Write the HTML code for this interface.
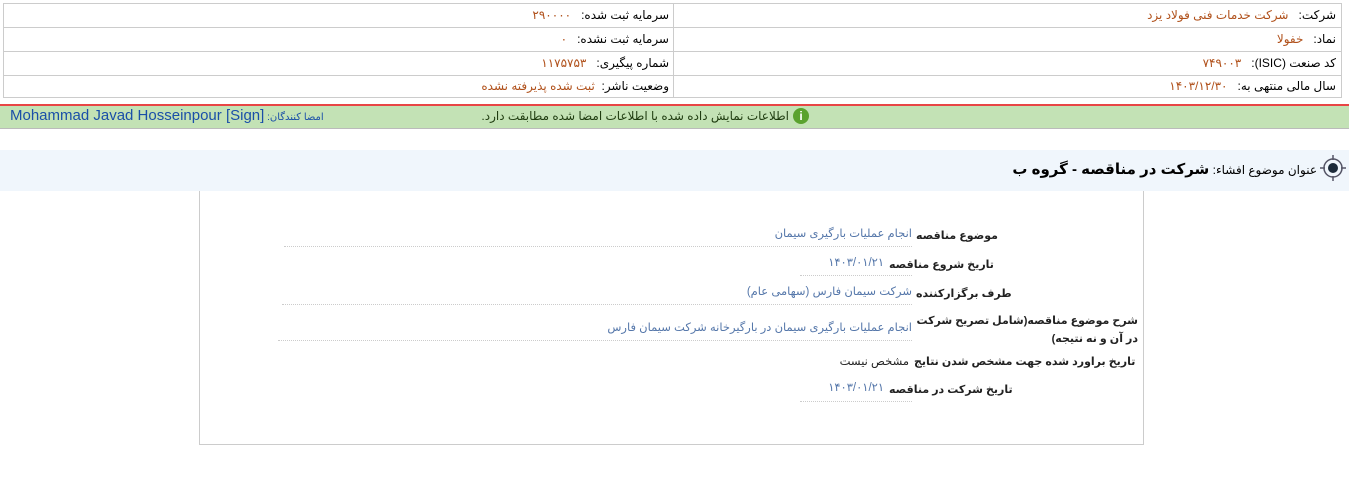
<!DOCTYPE html>
<html><head><meta charset="utf-8"><style>
body{margin:0;width:1349px;height:491px;background:#fff;font-family:"Liberation Sans","DejaVu Sans",sans-serif;font-size:12px;position:relative;overflow:hidden}
.a{position:absolute;white-space:nowrap;direction:rtl}
.tbl{position:absolute;left:3px;top:3px;width:1339px;height:95px;border:1px solid #ccc;box-sizing:border-box}
.hl{position:absolute;left:3px;width:1339px;height:1px;background:#ccc}
.v{color:#b0501a}
.lb{font-weight:bold;color:#222;font-size:11px}
.val{color:#5577aa;font-size:11.5px}
.dot{position:absolute;height:0;border-top:1px dotted #ccc}
</style></head><body>
<div class="tbl"></div>
<div class="hl" style="top:27px"></div>
<div class="hl" style="top:51px"></div>
<div class="hl" style="top:75px"></div>
<div style="position:absolute;left:673px;top:3px;width:1px;height:95px;background:#ccc"></div>

<div class="a" style="right:13px;top:8px">شرکت:&nbsp;&nbsp; <span class="v">شرکت خدمات فنی فولاد یزد</span></div>
<div class="a" style="right:13px;top:32px">نماد:&nbsp;&nbsp; <span class="v">خفولا</span></div>
<div class="a" style="right:13px;top:56px">کد صنعت (ISIC):&nbsp;&nbsp; <span class="v">۷۴۹۰۰۳</span></div>
<div class="a" style="right:13px;top:79px">سال مالی منتهی به:&nbsp;&nbsp; <span class="v">۱۴۰۳/۱۲/۳۰</span></div>
<div class="a" style="right:680px;top:8px">سرمایه ثبت شده:&nbsp;&nbsp; <span class="v">۲۹۰۰۰۰</span></div>
<div class="a" style="right:680px;top:32px">سرمایه ثبت نشده:&nbsp;&nbsp; <span class="v">۰</span></div>
<div class="a" style="right:680px;top:56px">شماره پیگیری:&nbsp;&nbsp; <span class="v">۱۱۷۵۷۵۳</span></div>
<div class="a" style="right:680px;top:79px">وضعیت ناشر:&nbsp; <span class="v">ثبت شده پذیرفته نشده</span></div>

<div style="position:absolute;left:0;top:104px;width:1349px;height:2px;background:#e84545"></div>
<div style="position:absolute;left:0;top:106px;width:1349px;height:22px;background:#c3e2b5;border-bottom:1px solid #bbb"></div>
<div style="position:absolute;left:793px;top:108px;width:16px;height:16px;border-radius:50%;background:#5aa22e;color:#fff;font-weight:bold;font-size:12px;text-align:center;line-height:16px">i</div>
<div class="a" style="right:560px;top:109px;color:#1f3c10">اطلاعات نمایش داده شده با اطلاعات امضا شده مطابقت دارد.</div>
<div style="position:absolute;left:10px;top:107px;color:#1a4fa8;font-size:15px;white-space:nowrap">Mohammad Javad Hosseinpour [Sign]<span style="font-size:10px"> :امضا کنندگان</span></div>

<div style="position:absolute;left:0;top:150px;width:1349px;height:41px;background:#f0f6fc"></div>
<svg style="position:absolute;left:1318px;top:153px" width="30" height="30" viewBox="0 0 30 30"><circle cx="15" cy="15" r="9" fill="none" stroke="#556" stroke-width="1.5"/><circle cx="15" cy="15" r="5" fill="#1c2a3a"/><path d="M15 2v5M15 23v5M2 15h5M23 15h5" stroke="#556" stroke-width="1.5"/></svg>
<div class="a" style="right:32px;top:160px;font-size:12px">عنوان موضوع افشاء: <b style="font-size:15px">شرکت در مناقصه - گروه ب</b></div>

<div style="position:absolute;left:199px;top:191px;width:945px;height:254px;border:1px solid #ccc;border-top:none;box-sizing:border-box"></div>

<div class="a lb" style="left:916px;top:229px">موضوع مناقصه</div>
<div class="a val" style="right:437px;top:226px">انجام عملیات بارگیری سیمان</div>
<div class="dot" style="left:284px;width:628px;top:246px"></div>

<div class="a lb" style="left:889px;top:258px">تاریخ شروع مناقصه</div>
<div class="a val" style="right:465px;top:255px">۱۴۰۳/۰۱/۲۱</div>
<div class="dot" style="left:800px;width:112px;top:275px"></div>

<div class="a lb" style="left:916px;top:287px">طرف برگزارکننده</div>
<div class="a val" style="right:437px;top:284px">شرکت سیمان فارس (سهامی عام)</div>
<div class="dot" style="left:282px;width:630px;top:304px"></div>

<div class="a lb" style="left:914px;top:312px;line-height:18px;white-space:normal;width:224px;text-align:right">شرح موضوع مناقصه(شامل تصریح شرکت در آن و نه نتیجه)</div>
<div class="a val" style="right:437px;top:320px">انجام عملیات بارگیری سیمان در بارگیرخانه شرکت سیمان فارس</div>
<div class="dot" style="left:278px;width:634px;top:340px"></div>

<div class="a lb" style="left:914px;top:355px">تاریخ براورد شده جهت مشخص شدن نتایج</div>
<div class="a" style="right:440px;top:354px;color:#222;font-size:11.5px">مشخص نیست</div>

<div class="a lb" style="left:889px;top:383px">تاریخ شرکت در مناقصه</div>
<div class="a val" style="right:465px;top:380px">۱۴۰۳/۰۱/۲۱</div>
<div class="dot" style="left:800px;width:112px;top:401px"></div>
</body></html>
